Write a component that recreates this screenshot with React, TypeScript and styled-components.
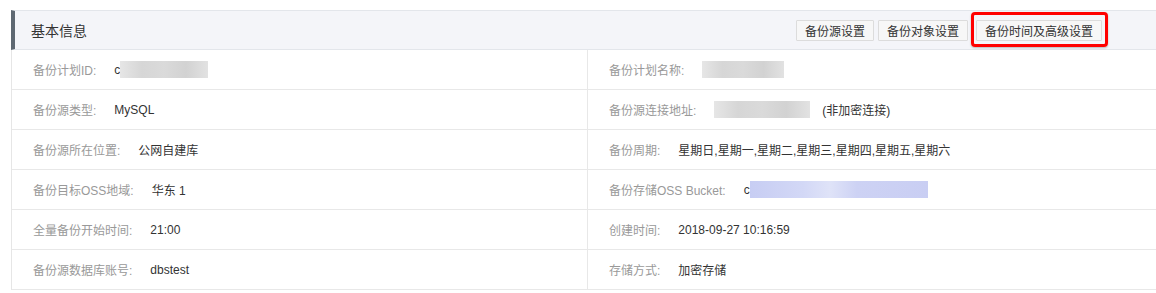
import styled, { createGlobalStyle } from "styled-components";

const GlobalStyle = createGlobalStyle`
  html, body {
    margin: 0;
    padding: 0;
    background: #fff;
    overflow: hidden;
  }
  body {
    font-family: "Liberation Sans", "Noto Sans CJK SC", sans-serif;
    font-size: 12px;
    color: #333;
  }
`;

const Page = styled.div`
  padding: 10px 0 0 11px;
  width: 1152px;
`;

const Panel = styled.section`
  border-left: 1px solid #e6e6e6;
`;

const Header = styled.header`
  display: flex;
  align-items: center;
  justify-content: space-between;
  height: 38px;
  background: #f4f5f9;
  border-top: 1px solid #e3e6eb;
  border-bottom: 1px solid #e3e6eb;
  border-left: 4px solid #5e6872;
  margin-left: -1px;
  padding: 0 61px 0 16px;
`;

const Title = styled.h3`
  margin: 0;
  font-size: 14px;
  font-weight: 400;
  color: #333;
`;

const Actions = styled.div`
  display: flex;
  gap: 4px;
  align-items: center;
`;

const Button = styled.button<{ $highlight?: boolean }>`
  position: relative;
  height: 21px;
  padding: 0 8px;
  font-family: inherit;
  font-size: 12px;
  color: #333;
  background: #f7f7f7;
  border: 1px solid #dcdcdc;
  border-radius: 1px;
  margin-left: ${(p) => (p.$highlight ? "4px" : "0")};

  ${(p) =>
    p.$highlight &&
    `
    &::after {
      content: "";
      position: absolute;
      left: -6px;
      top: -9px;
      right: -7px;
      bottom: -7px;
      border: 3px solid #f00;
      border-radius: 4px;
      box-shadow: 0 1px 2px rgba(0, 0, 0, 0.25);
    }
  `}
`;

const Grid = styled.div`
  display: grid;
  grid-template-columns: 576px 1fr;
`;

const Cell = styled.div<{ $right?: boolean }>`
  display: flex;
  align-items: center;
  height: 39px;
  padding-left: 21px;
  border-bottom: 1px solid #e8e8e8;
  border-right: ${(p) => (p.$right ? "none" : "1px solid #e8e8e8")};
  white-space: nowrap;
`;

const Label = styled.span`
  color: #999;
  margin-right: 18px;
`;

const Value = styled.span`
  color: #333;
  display: flex;
  align-items: center;
`;

const Masked = styled.span<{ $w: number; $blue?: boolean }>`
  display: inline-block;
  height: 17px;
  width: ${(p) => p.$w}px;
  background: ${(p) =>
    p.$blue
      ? "linear-gradient(90deg, #c7cdf3 0%, #d3d8f6 30%, #dfe3f8 45%, #cdd2f4 60%, #c9cef3 100%)"
      : "linear-gradient(90deg, #e6e6e6 0%, #d6d6d6 25%, #dadada 50%, #d2d2d2 75%, #e2e2e2 100%)"};
`;

const Hint = styled.span`
  margin-left: 12px;
`;

type Row = { label: string; value: React.ReactNode };

const rows: Row[] = [
  {
    label: "备份计划ID:",
    value: (
      <Value>
        c<Masked $w={88} />
      </Value>
    ),
  },
  { label: "备份计划名称:", value: <Value><Masked $w={82} /></Value> },
  { label: "备份源类型:", value: <Value>MySQL</Value> },
  {
    label: "备份源连接地址:",
    value: (
      <Value>
        <Masked $w={96} />
        <Hint>(非加密连接)</Hint>
      </Value>
    ),
  },
  { label: "备份源所在位置:", value: <Value>公网自建库</Value> },
  {
    label: "备份周期:",
    value: <Value>星期日,星期一,星期二,星期三,星期四,星期五,星期六</Value>,
  },
  { label: "备份目标OSS地域:", value: <Value>华东 1</Value> },
  {
    label: "备份存储OSS Bucket:",
    value: (
      <Value>
        c<Masked $w={178} $blue />
      </Value>
    ),
  },
  { label: "全量备份开始时间:", value: <Value>21:00</Value> },
  { label: "创建时间:", value: <Value>2018-09-27 10:16:59</Value> },
  { label: "备份源数据库账号:", value: <Value>dbstest</Value> },
  { label: "存储方式:", value: <Value>加密存储</Value> },
];

export default function App() {
  return (
    <>
      <GlobalStyle />
      <Page>
        <Panel>
          <Header>
            <Title>基本信息</Title>
            <Actions>
              <Button>备份源设置</Button>
              <Button>备份对象设置</Button>
              <Button $highlight>备份时间及高级设置</Button>
            </Actions>
          </Header>
          <Grid>
            {rows.map((r, i) => (
              <Cell key={r.label} $right={i % 2 === 1}>
                <Label>{r.label}</Label>
                {r.value}
              </Cell>
            ))}
          </Grid>
        </Panel>
      </Page>
    </>
  );
}
